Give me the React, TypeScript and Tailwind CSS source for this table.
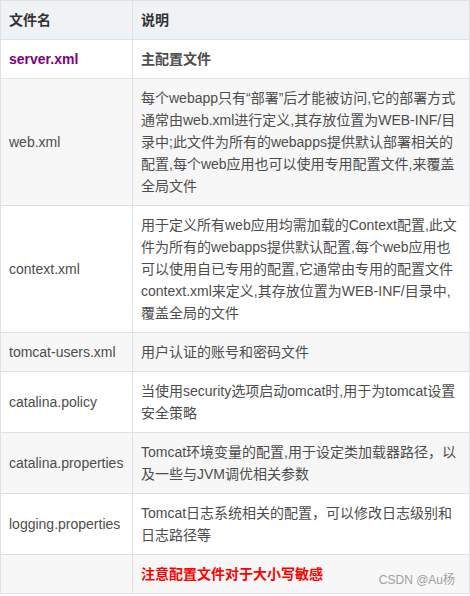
import React from "react";

type Row = { name: string; lines: string[]; bg: string; nameClass?: string; descClass?: string };

const rows: Row[] = [
  { name: "server.xml", lines: ["主配置文件"], bg: "bg-white", nameClass: "font-bold text-[#80007f]", descClass: "font-bold" },
  {
    name: "web.xml",
    lines: [
      "每个webapp只有“部署”后才能被访问,它的部署方式",
      "通常由web.xml进行定义,其存放位置为WEB-INF/目",
      "录中;此文件为所有的webapps提供默认部署相关的",
      "配置,每个web应用也可以使用专用配置文件,来覆盖",
      "全局文件",
    ],
    bg: "bg-[#f7f7f7]",
  },
  {
    name: "context.xml",
    lines: [
      "用于定义所有web应用均需加载的Context配置,此文",
      "件为所有的webapps提供默认配置,每个web应用也",
      "可以使用自已专用的配置,它通常由专用的配置文件",
      "context.xml来定义,其存放位置为WEB-INF/目录中,",
      "覆盖全局的文件",
    ],
    bg: "bg-white",
  },
  { name: "tomcat-users.xml", lines: ["用户认证的账号和密码文件"], bg: "bg-[#f7f7f7]" },
  {
    name: "catalina.policy",
    lines: ["当使用security选项启动omcat时,用于为tomcat设置", "安全策略"],
    bg: "bg-white",
  },
  {
    name: "catalina.properties",
    lines: ["Tomcat环境变量的配置,用于设定类加载器路径，以", "及一些与JVM调优相关参数"],
    bg: "bg-[#f7f7f7]",
  },
  {
    name: "logging.properties",
    lines: ["Tomcat日志系统相关的配置，可以修改日志级别和", "日志路径等"],
    bg: "bg-white",
  },
];

const font = { fontFamily: '"Liberation Sans", Arial, "Noto Sans CJK SC", sans-serif' };

export default function App() {
  return (
    <div className="w-[470px] h-[596px] bg-white text-[14px] leading-[22px] text-[#4d4d4d]" style={font}>
      <div className="w-[470px] border-l border-t border-[#dfe2e5] grid grid-cols-[132px_337px]">
        <div className="bg-[#eff3f5] border-r border-b border-[#dfe2e5] px-2 py-2 font-bold text-[#333]">文件名</div>
        <div className="bg-[#eff3f5] border-r border-b border-[#dfe2e5] px-2 py-2 font-bold text-[#333]">说明</div>
        {rows.map((r) => (
          <React.Fragment key={r.name}>
            <div className={`${r.bg} border-r border-b border-[#dfe2e5] px-2 py-2 flex items-center whitespace-nowrap ${r.nameClass ?? ""}`}>
              {r.name}
            </div>
            <div className={`${r.bg} border-r border-b border-[#dfe2e5] px-2 py-2 ${r.descClass ?? ""}`}>
              {r.lines.map((l, i) => (
                <div key={i} className="whitespace-nowrap">{l}</div>
              ))}
            </div>
          </React.Fragment>
        ))}
        <div className="bg-[#f7f7f7] border-r border-b border-[#dfe2e5] px-2 py-2 h-[39px]"></div>
        <div className="relative bg-[#f7f7f7] border-r border-b border-[#dfe2e5] px-2 py-2 font-bold text-[#ff0000]">
          注意配置文件对于大小写敏感
          <span className="absolute right-[14px] bottom-[6px] text-[12px] leading-[14px] font-normal text-[#a0a0a0]">CSDN @Au杨</span>
        </div>
      </div>
    </div>
  );
}
